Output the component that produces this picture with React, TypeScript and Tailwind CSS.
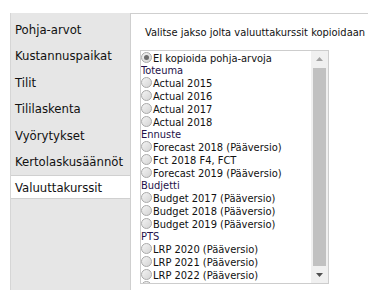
import React from 'react';

type Row = { kind: 'group'; label: string } | { kind: 'radio'; label: string; checked?: boolean };

const navItems = [
  'Pohja-arvot',
  'Kustannuspaikat',
  'Tilit',
  'Tililaskenta',
  'Vyörytykset',
  'Kertolaskusäännöt',
  'Valuuttakurssit',
];

const rows: Row[] = [
  { kind: 'radio', label: 'EI kopioida pohja-arvoja', checked: true },
  { kind: 'group', label: 'Toteuma' },
  { kind: 'radio', label: 'Actual 2015' },
  { kind: 'radio', label: 'Actual 2016' },
  { kind: 'radio', label: 'Actual 2017' },
  { kind: 'radio', label: 'Actual 2018' },
  { kind: 'group', label: 'Ennuste' },
  { kind: 'radio', label: 'Forecast 2018 (Pääversio)' },
  { kind: 'radio', label: 'Fct 2018 F4, FCT' },
  { kind: 'radio', label: 'Forecast 2019 (Pääversio)' },
  { kind: 'group', label: 'Budjetti' },
  { kind: 'radio', label: 'Budget 2017 (Pääversio)' },
  { kind: 'radio', label: 'Budget 2018 (Pääversio)' },
  { kind: 'radio', label: 'Budget 2019 (Pääversio)' },
  { kind: 'group', label: 'PTS' },
  { kind: 'radio', label: 'LRP 2020 (Pääversio)' },
  { kind: 'radio', label: 'LRP 2021 (Pääversio)' },
  { kind: 'radio', label: 'LRP 2022 (Pääversio)' },
];

const Radio: React.FC<{ checked?: boolean }> = ({ checked }) => (
  <span className="relative -top-[2px] w-[11px] h-[11px] shrink-0 rounded-full border border-[#a9a9a9] bg-gradient-to-br from-[#f4f4f4] to-[#d4d4d4] flex items-center justify-center">
    {checked && <span className="w-[5px] h-[5px] rounded-full bg-[#6e6e6e]" />}
  </span>
);

export default function App() {
  const [selected] = React.useState('Valuuttakurssit');

  return (
    <div className="w-[380px] h-[295px] bg-white pt-[13px] pl-[10px] font-['DejaVu_Sans_Condensed','DejaVu_Sans',sans-serif] overflow-hidden">
      <div className="flex">
        <div className="w-[120px] h-[277px] bg-[#e6e6e6] border-l border-[#d6d6d6] pt-[2px]">
          {navItems.map((item) => (
            <div key={item} className="h-[26.5px] flex items-center">
              {item === selected ? (
                <div className="w-full h-[24px] bg-white border-y border-[#d0d0d0] flex items-center pl-[4px] text-[13px] text-[#111]">
                  {item}
                </div>
              ) : (
                <div className="pl-[4px] text-[13px] text-[#111] relative top-[1px]">{item}</div>
              )}
            </div>
          ))}
        </div>

        <div className="w-[238px] border-t border-l border-[#cfcfcf] pl-[9px] pt-[12px]">
          <div className="pl-[5px] text-[11px] text-[#111] leading-[14px]">
            Valitse jakso jolta valuuttakurssit kopioidaan
          </div>
          <div className="mt-[10px] w-[189px] h-[234px] border border-[#cdcdcd] flex">
            <div className="flex-1 overflow-hidden text-[11px] text-[#111] pt-[1px]">
              {rows.map((r) =>
                r.kind === 'group' ? (
                  <div key={r.label} className="h-[12px] leading-[12px] text-[#24124a]">
                    {r.label}
                  </div>
                ) : (
                  <div key={r.label} className="h-[13px] flex items-end leading-[13px] whitespace-nowrap">
                    <Radio checked={r.checked} />
                    <span className="ml-px">{r.label}</span>
                  </div>
                )
              )}
              <div className="h-[13px] flex items-start pt-[1px]">
                <Radio />
              </div>
            </div>
            <div className="w-[17px] bg-[#f0f0f0] flex flex-col items-center">
              <svg width="9" height="17" viewBox="0 0 9 17" className="shrink-0">
                <path d="M1 10 L4.5 6 L8 10 Z" fill="#a3a3a3" />
              </svg>
              <div className="w-[13px] flex-1 bg-[#c1c1c1]" />
              <svg width="9" height="17" viewBox="0 0 9 17" className="shrink-0">
                <path d="M1 7 L4.5 11 L8 7 Z" fill="#505050" />
              </svg>
            </div>
          </div>
        </div>
      </div>
    </div>
  );
}
